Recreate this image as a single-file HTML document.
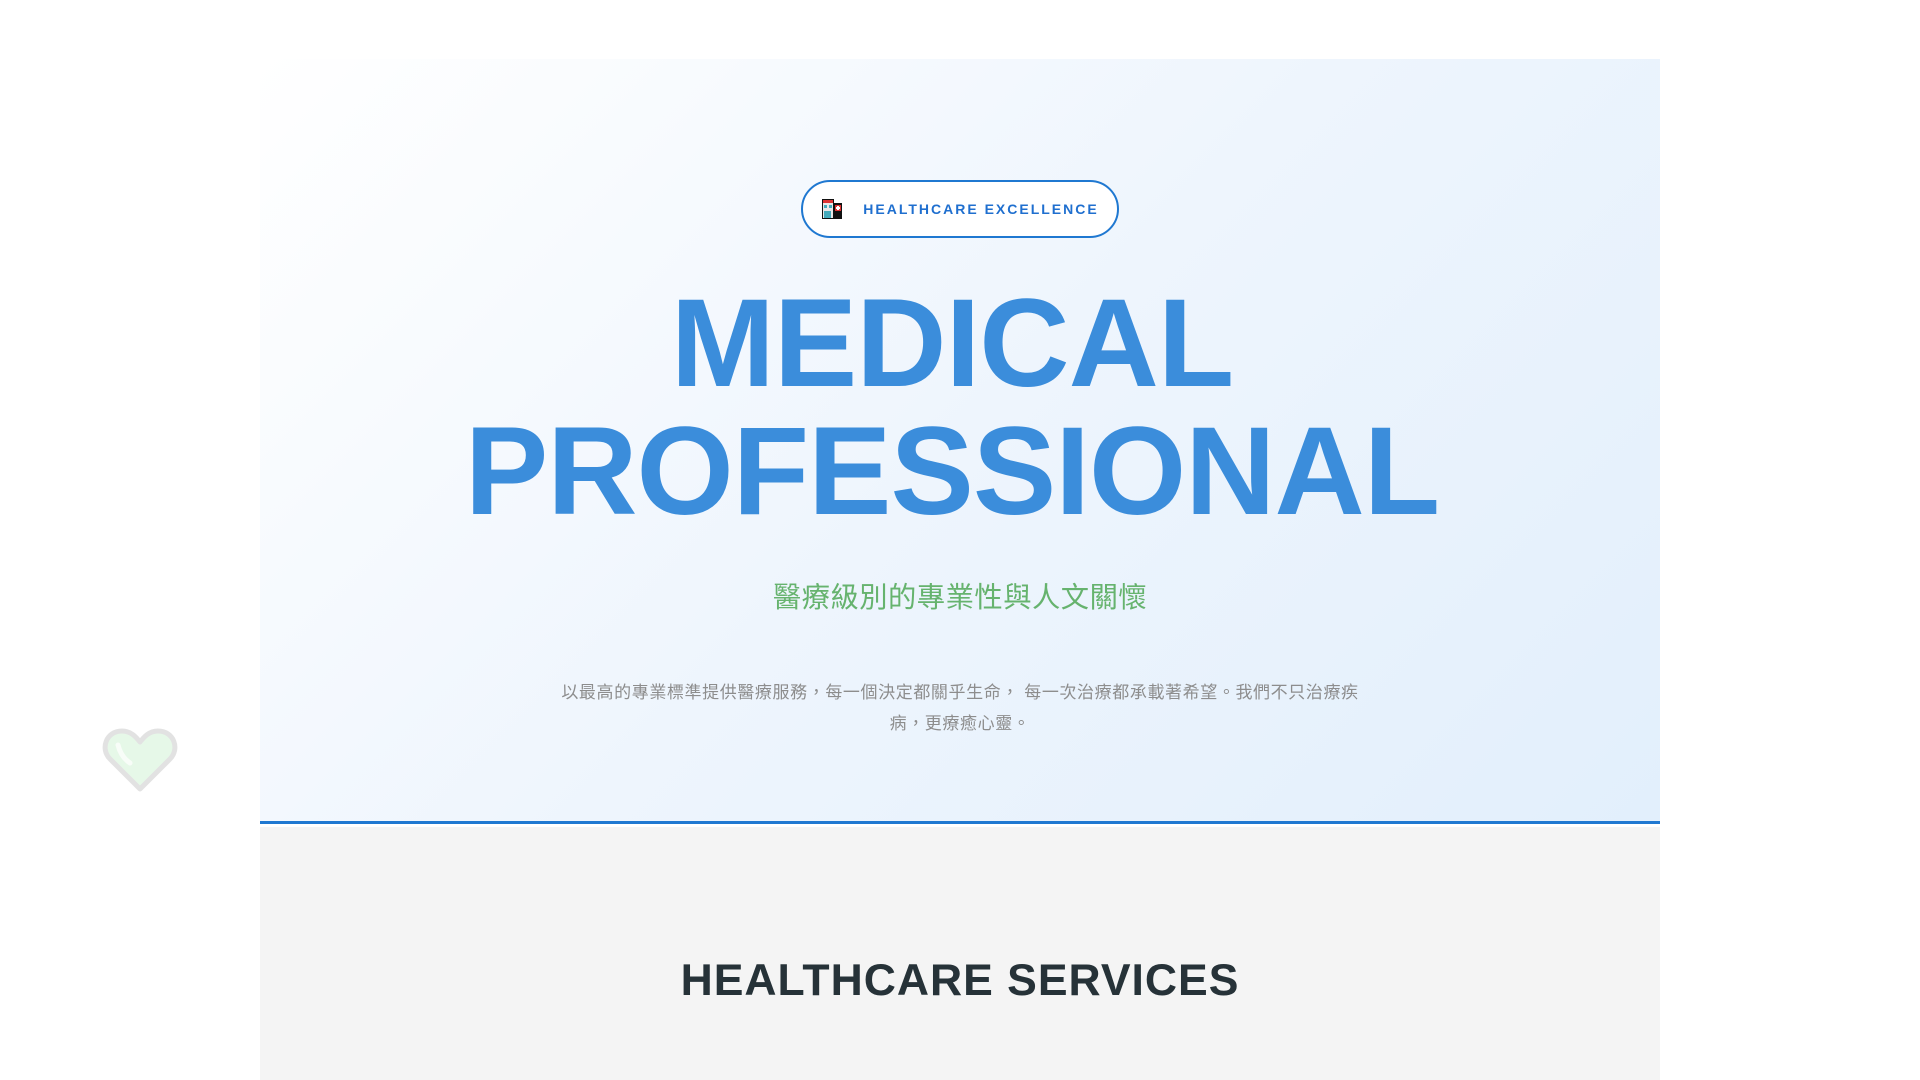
<!DOCTYPE html>
<html><head><meta charset="utf-8"><style>
*{margin:0;padding:0;box-sizing:border-box}
body{width:1920px;height:1080px;background:#fff;position:relative;overflow:hidden;font-family:"Liberation Sans","Noto Sans CJK TC",sans-serif}
.hero{position:absolute;left:260px;top:59px;width:1400px;height:765px;background:linear-gradient(135deg,#ffffff 0%,#eef5fd 50%,#e2effc 100%);border-bottom:3px solid #1f78d1;text-align:center}
.badge{position:absolute;left:541px;top:121px;width:318px;height:58px;border:2px solid #1f78d1;border-radius:29px;background:#fff;display:flex;align-items:center;justify-content:center;gap:20px;color:#1f6fcf;font-weight:bold;font-size:14px;letter-spacing:2px}
h1{position:absolute;left:-8px;width:1400px;top:221px;color:#3b8ddb;font-size:125px;line-height:128px;font-weight:bold;letter-spacing:-1px}
.sub{position:absolute;left:0;width:1400px;top:516px;color:#66b36e;font-size:28.3px;letter-spacing:0.5px}
.p{position:absolute;left:290px;width:820px;top:618px;color:#8d8d8d;font-size:17px;line-height:31px;letter-spacing:0.6px}
.gray{position:absolute;left:260px;top:827px;width:1400px;height:253px;background:#f4f4f4;text-align:center}
.gray h2{margin-top:129px;color:#263238;font-size:44.5px;font-weight:bold;letter-spacing:1px}
</style></head><body>
<div class="hero">
 <div class="badge"><svg width="22" height="22" viewBox="0 0 22 22"><rect x="1" y="1" width="12" height="20" fill="#111"/><rect x="2" y="2" width="10" height="18" fill="#e8e8e8"/><rect x="2" y="2" width="10" height="3" fill="#d33"/><rect x="3" y="7" width="3" height="3" fill="#4ab"/><rect x="8" y="7" width="3" height="3" fill="#4ab"/><rect x="3" y="13" width="7" height="7" fill="#4ab"/><rect x="13" y="5" width="8" height="16" fill="#111"/><rect x="14" y="7" width="6" height="6" fill="#d33"/><rect x="16" y="8" width="2" height="4" fill="#fff"/><rect x="15" y="9" width="4" height="2" fill="#fff"/></svg><span>HEALTHCARE EXCELLENCE</span></div>
 <h1>MEDICAL<br>PROFESSIONAL</h1>
 <div class="sub">醫療級別的專業性與人文關懷</div>
 <div class="p">以最高的專業標準提供醫療服務，每一個決定都關乎生命， 每一次治療都承載著希望。我們不只治療疾病，更療癒心靈。</div>
</div>
<svg style="position:absolute;left:102px;top:725px" width="76" height="68" viewBox="0 0 76 68"><path d="M38 64 L8 34 C-2 24 4 6 20 6 C29 6 34 12 38 17 C42 12 47 6 56 6 C72 6 78 24 68 34 Z" fill="#e6f8e8" stroke="#e2e2e2" stroke-width="5" stroke-linejoin="round"/><path d="M16 20 C18 28 22 34 28 38" stroke="#fff" stroke-width="5" stroke-linecap="round" fill="none" opacity=".7"/></svg>
<div class="gray"><h2>HEALTHCARE SERVICES</h2></div>
</body></html>
